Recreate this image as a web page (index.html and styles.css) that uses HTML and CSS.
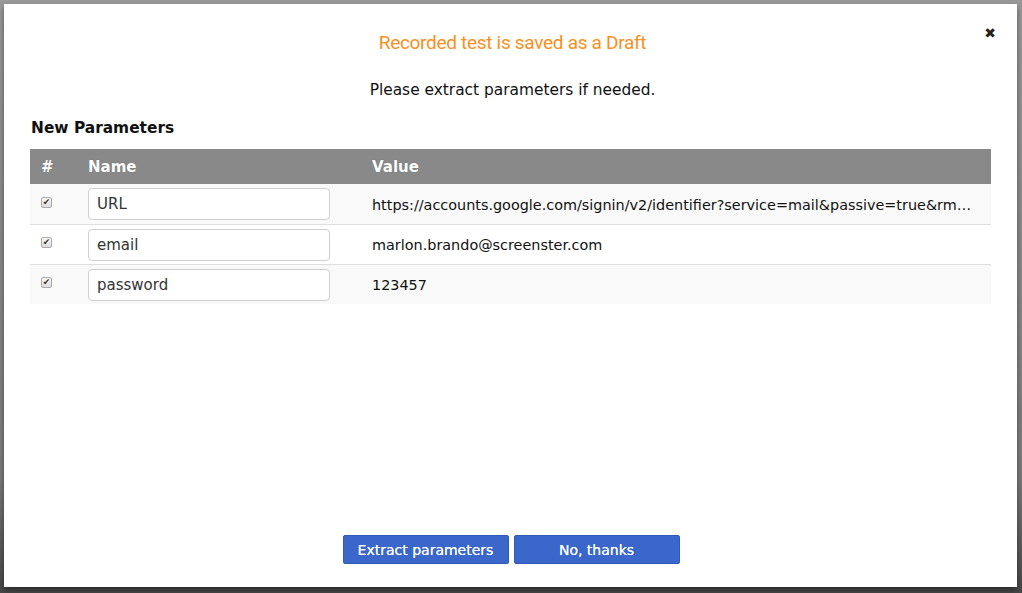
FILE: index.html
```html
<!DOCTYPE html>
<html>
<head>
<meta charset="utf-8">
<link rel="stylesheet" href="styles.css">
</head>
<body>
<div class="modal">
  <button class="close" aria-label="Close">&#10006;</button>
  <h1 class="title">Recorded test is saved as a Draft</h1>
  <p class="subtitle">Please extract parameters if needed.</p>
  <h2 class="section">New Parameters</h2>
  <table class="params">
    <thead>
      <tr><th class="c-num">#</th><th class="c-name">Name</th><th class="c-value">Value</th></tr>
    </thead>
    <tbody>
      <tr class="odd">
        <td class="c-num"><span class="check">&#10004;</span></td>
        <td class="c-name"><input class="field" type="text" value="URL"></td>
        <td class="c-value"><div class="val">https://accounts.google.com/signin/v2/identifier?service=mail&amp;passive=true&amp;rm…</div></td>
      </tr>
      <tr>
        <td class="c-num"><span class="check">&#10004;</span></td>
        <td class="c-name"><input class="field" type="text" value="email"></td>
        <td class="c-value"><div class="val">marlon.brando@screenster.com</div></td>
      </tr>
      <tr class="odd">
        <td class="c-num"><span class="check">&#10004;</span></td>
        <td class="c-name"><input class="field" type="text" value="password"></td>
        <td class="c-value"><div class="val">123457</div></td>
      </tr>
    </tbody>
  </table>
  <div class="footer">
    <button class="btn btn-extract">Extract parameters</button>
    <button class="btn btn-no">No, thanks</button>
  </div>
</div>
</body>
</html>
```
FILE: styles.css
```css
html, body {
  margin: 0;
  height: 100%;
}
body {
  background: linear-gradient(to bottom, #9a9a9a 0%, #7d7d7d 80%, #474747 100%);
  padding: 4px 5px 6px 4px;
  box-sizing: border-box;
  font-family: "DejaVu Sans", Verdana, sans-serif;
  color: #222;
  overflow: hidden;
}
.modal {
  position: relative;
  background: #fff;
  height: 583px;
  box-sizing: border-box;
  padding: 26px 26px 23px 26px;
  display: flex;
  flex-direction: column;
  box-shadow: 0 3px 6px rgba(0,0,0,0.45);
}
.close {
  position: absolute;
  top: 21px;
  right: 21px;
  border: 0;
  background: none;
  padding: 0;
  font-size: 14px;
  font-weight: bold;
  color: #222;
  cursor: pointer;
  font-family: "DejaVu Sans", sans-serif;
}
.title {
  margin: 0;
  text-align: center;
  font-family: Roboto, "Open Sans", sans-serif;
  font-weight: 400;
  font-size: 19px;
  line-height: 26px;
  letter-spacing: -0.3px;
  color: #f7901e;
  padding-left: 4px;
}
.subtitle {
  margin: 25px 0 0;
  text-align: center;
  font-size: 15.4px;
  line-height: 18px;
  color: #111;
  padding-left: 4px;
}
.section {
  margin: 20px 0 0 1px;
  font-size: 15.4px;
  font-weight: bold;
  line-height: 18px;
  color: #111;
}
.params {
  margin-top: 12px;
  width: 961px;
  border-collapse: collapse;
  table-layout: fixed;
  font-size: 14.4px;
}
.params th {
  background: #898989;
  color: #fff;
  font-weight: bold;
  font-size: 15px;
  text-align: left;
  height: 35px;
  padding: 0 0 0 11px;
  text-shadow: 0 0 1px rgba(0,0,0,0.25);
}
.params th.c-num { width: 37px; }
.params th.c-name { width: 272px; padding-left: 10px; }
.params th.c-value { padding-left: 12px; }
.params td {
  height: 39px;
  padding: 0;
  border-top: 1px solid #dedede;
  vertical-align: middle;
}
.params tbody tr:first-child td { border-top: 0; height: 40px; }
.params tr.odd td { background: #f9f9f9; }
.params td.c-num { padding-left: 11px; }
.check {
  display: block;
  box-sizing: border-box;
  width: 11px;
  height: 11px;
  border: 1px solid #a9a9a9;
  border-radius: 2px;
  background: linear-gradient(#fafafa, #dcdcdc);
  color: #333;
  font-size: 9px;
  line-height: 9px;
  text-align: center;
  position: relative;
  top: -2px;
  overflow: hidden;
}
.params td.c-name { padding-left: 10px; }
.field {
  box-sizing: border-box;
  width: 242px;
  height: 32px;
  border: 1px solid #cfcfcf;
  border-radius: 4px;
  padding: 0 8px;
  font-family: "DejaVu Sans", Verdana, sans-serif;
  font-size: 15px;
  color: #333;
  background: #fff;
  display: block;
}
.params td.c-value { padding: 0 10px 0 12px; }
.val {
  white-space: nowrap;
  overflow: hidden;
  color: #111;
  padding-top: 1px;
}
.footer {
  margin-top: auto;
  display: flex;
  justify-content: center;
  gap: 5px;
  padding-left: 1px;
}
.btn {
  height: 29px;
  width: 166px;
  border: 1px solid #2f5bb8;
  border-radius: 2px;
  background: #3a67c9;
  color: #fff;
  font-family: "DejaVu Sans", Verdana, sans-serif;
  font-size: 14px;
  padding: 0;
  text-shadow: 0 0 0.6px #fff;
}
```
